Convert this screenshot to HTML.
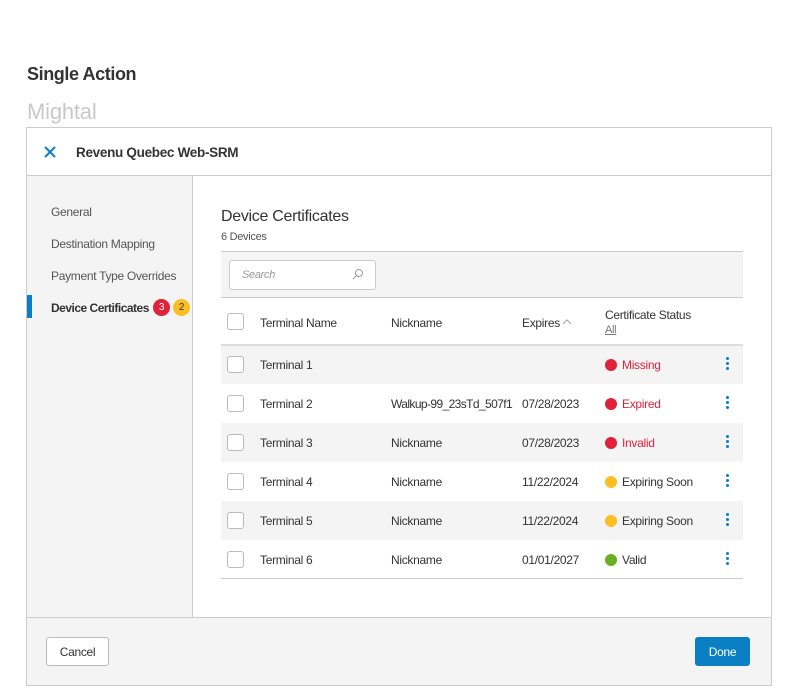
<!DOCTYPE html><html><head><style>
*{box-sizing:border-box;margin:0;padding:0}
body{width:792px;height:698px;background:#fff;font-family:"Liberation Sans",sans-serif;color:#333;position:relative;overflow:hidden;letter-spacing:-0.3px}
.a{position:absolute}
.t{font-size:12px;color:#333;white-space:nowrap}
.cb{position:absolute;width:17px;height:17px;border:1px solid #bbb;border-radius:3px;background:#fff}
.dot{display:inline-block;width:12px;height:12px;border-radius:50%;vertical-align:-2px;margin-right:5px}
.k{position:absolute;width:3px}
.k i{display:block;width:3px;height:3px;border-radius:50%;background:#0b7fc4;margin-bottom:2px}
</style></head><body>
<div class="a" style="left:27px;top:64px;font-size:18px;font-weight:bold;color:#333;letter-spacing:-0.4px">Single Action</div>
<div class="a" style="left:27px;top:99px;font-size:22px;color:#c8c8c8;letter-spacing:-0.2px">Mightal</div>
<div class="a" style="left:26px;top:127px;width:746px;height:559px;border:1px solid #ccc;background:#fff"></div>
<div class="a" style="left:27px;top:175px;width:744px;height:1px;background:#ccc"></div>
<svg class="a" style="left:44px;top:146px" width="12" height="12"><path d="M1 1L11 11M11 1L1 11" stroke="#0b7fc4" stroke-width="2"/></svg>
<div class="a" style="left:76px;top:145px;font-size:13.5px;font-weight:bold;color:#333">Revenu Quebec Web-SRM</div>
<div class="a" style="left:27px;top:176px;width:166px;height:442px;background:#f4f4f4;border-right:1px solid #ccc"></div>
<div class="a" style="left:27px;top:617px;width:744px;height:68px;background:#f4f4f4;border-top:1px solid #ccc"></div>
<div class="a t" style="left:51px;top:205px;color:#555">General</div>
<div class="a t" style="left:51px;top:237px;color:#555">Destination Mapping</div>
<div class="a t" style="left:51px;top:269px;color:#555">Payment Type Overrides</div>
<div class="a" style="left:27px;top:295px;width:5px;height:23px;background:#0b7fc4"></div>
<div class="a t" style="left:51px;top:301px;font-weight:bold;letter-spacing:-0.5px">Device Certificates</div>
<div class="a" style="left:153px;top:299px;width:17px;height:17px;border-radius:50%;background:#e0213a;color:#fff;font-size:10px;text-align:center;line-height:17px">3</div>
<div class="a" style="left:173px;top:299px;width:17px;height:17px;border-radius:50%;background:#fbbf24;color:#333;font-size:10px;text-align:center;line-height:17px">2</div>
<div class="a" style="left:221px;top:208px;font-size:16px;color:#333">Device Certificates</div>
<div class="a" style="left:221px;top:231px;font-size:11px;color:#555">6 Devices</div>
<div class="a" style="left:221px;top:251px;width:522px;height:47px;background:#f4f4f4;border-top:1px solid #ccc;border-bottom:1px solid #ccc"></div>
<div class="a" style="left:229px;top:260px;width:147px;height:30px;background:#fff;border:1px solid #ccc;border-radius:3px;font-size:11px;font-style:italic;color:#999;padding:8px 12px">Search</div>
<svg class="a" style="left:352px;top:268px" width="12" height="12"><circle cx="7" cy="5" r="3.5" fill="none" stroke="#999"/><line x1="4.5" y1="7.5" x2="1" y2="11" stroke="#999"/></svg>
<div class="a" style="left:221px;top:344px;width:522px;height:2px;background:#ddd"></div>
<div class="cb" style="left:227px;top:313px"></div>
<div class="a t" style="left:260px;top:316px">Terminal Name</div>
<div class="a t" style="left:391px;top:316px">Nickname</div>
<div class="a t" style="left:522px;top:316px">Expires</div>
<svg class="a" style="left:562px;top:318px" width="10" height="7"><path d="M1 6L5 2L9 6" fill="none" stroke="#aaa" stroke-width="1.2"/></svg>
<div class="a t" style="left:605px;top:308px">Certificate Status</div>
<div class="a" style="left:605px;top:324px;font-size:11px;color:#777;text-decoration:underline">All</div>

<div class="a" style="left:221px;top:346px;width:522px;height:38px;background:#f4f4f4"></div>
<div class="a" style="left:221px;top:423px;width:522px;height:39px;background:#f4f4f4"></div>
<div class="a" style="left:221px;top:501px;width:522px;height:39px;background:#f4f4f4"></div>
<div class="a" style="left:221px;top:578px;width:522px;height:1px;background:#ccc"></div>

<div class="cb" style="left:227px;top:356px"></div><div class="a t" style="left:260px;top:358px">Terminal 1</div><div class="a t" style="left:605px;top:358px;color:#e0213a"><span class="dot" style="background:#e0213a"></span>Missing</div><div class="k" style="left:726px;top:357px"><i></i><i></i><i></i></div>
<div class="cb" style="left:227px;top:395px"></div><div class="a t" style="left:260px;top:397px">Terminal 2</div><div class="a t" style="left:391px;top:397px;letter-spacing:-0.6px">Walkup-99_23sTd_507f1</div><div class="a t" style="left:522px;top:397px">07/28/2023</div><div class="a t" style="left:605px;top:397px;color:#e0213a"><span class="dot" style="background:#e0213a"></span>Expired</div><div class="k" style="left:726px;top:396px"><i></i><i></i><i></i></div>
<div class="cb" style="left:227px;top:434px"></div><div class="a t" style="left:260px;top:436px">Terminal 3</div><div class="a t" style="left:391px;top:436px">Nickname</div><div class="a t" style="left:522px;top:436px">07/28/2023</div><div class="a t" style="left:605px;top:436px;color:#e0213a"><span class="dot" style="background:#e0213a"></span>Invalid</div><div class="k" style="left:726px;top:435px"><i></i><i></i><i></i></div>
<div class="cb" style="left:227px;top:473px"></div><div class="a t" style="left:260px;top:475px">Terminal 4</div><div class="a t" style="left:391px;top:475px">Nickname</div><div class="a t" style="left:522px;top:475px">11/22/2024</div><div class="a t" style="left:605px;top:475px"><span class="dot" style="background:#fbbf24"></span>Expiring Soon</div><div class="k" style="left:726px;top:474px"><i></i><i></i><i></i></div>
<div class="cb" style="left:227px;top:512px"></div><div class="a t" style="left:260px;top:514px">Terminal 5</div><div class="a t" style="left:391px;top:514px">Nickname</div><div class="a t" style="left:522px;top:514px">11/22/2024</div><div class="a t" style="left:605px;top:514px"><span class="dot" style="background:#fbbf24"></span>Expiring Soon</div><div class="k" style="left:726px;top:513px"><i></i><i></i><i></i></div>
<div class="cb" style="left:227px;top:551px"></div><div class="a t" style="left:260px;top:553px">Terminal 6</div><div class="a t" style="left:391px;top:553px">Nickname</div><div class="a t" style="left:522px;top:553px">01/01/2027</div><div class="a t" style="left:605px;top:553px"><span class="dot" style="background:#6ab023"></span>Valid</div><div class="k" style="left:726px;top:552px"><i></i><i></i><i></i></div>

<div class="a" style="left:46px;top:637px;width:63px;height:29px;background:#fff;border:1px solid #bbb;border-radius:3px;font-size:12px;text-align:center;line-height:27px;padding-top:1px">Cancel</div>
<div class="a" style="left:695px;top:637px;width:55px;height:29px;background:#0b7fc4;border-radius:3px;font-size:12px;color:#fff;text-align:center;line-height:31px">Done</div>
</body></html>
